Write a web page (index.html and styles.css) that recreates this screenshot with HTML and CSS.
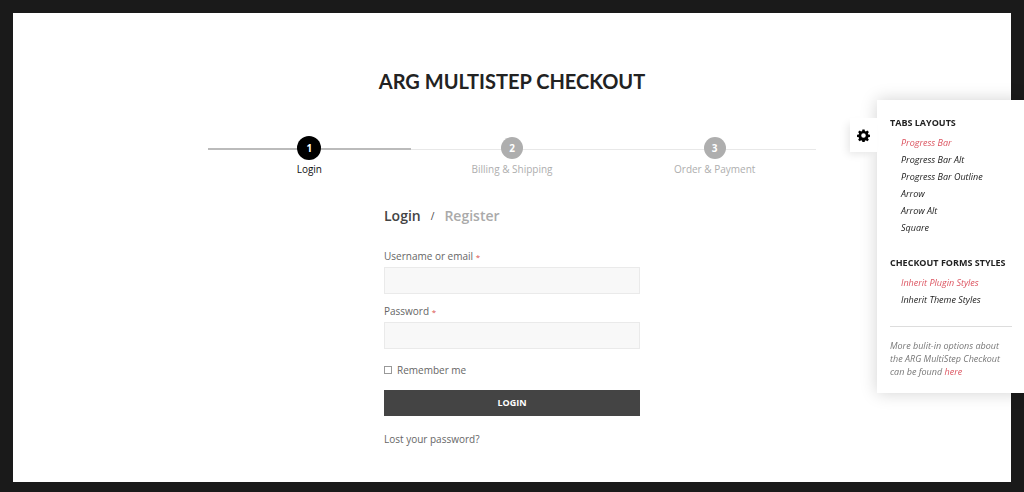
FILE: index.html
```html
<!DOCTYPE html>
<html lang="en">
<head>
    <meta charset="UTF-8">
    <meta name="viewport" content="width=device-width, initial-scale=1.0">
    <title>ARG MultiStep Checkout</title>
    <link rel="stylesheet" href="styles.css">
</head>
<body>
    <main class="page">
        <h1 class="page-title">ARG MULTISTEP CHECKOUT</h1>

        <ol class="steps">
            <li class="step current">
                <div class="step-marker"><span class="step-number">1</span></div>
                <div class="step-name">Login</div>
            </li>
            <li class="step">
                <div class="step-marker"><span class="step-number">2</span></div>
                <div class="step-name">Billing &amp; Shipping</div>
            </li>
            <li class="step">
                <div class="step-marker"><span class="step-number">3</span></div>
                <div class="step-name">Order &amp; Payment</div>
            </li>
        </ol>

        <section class="account">
            <div class="account-tabs">
                <a class="account-tab active" href="#login">Login</a>
                <span class="separator">/</span>
                <a class="account-tab" href="#register">Register</a>
            </div>

            <form class="login-form" id="login">
                <label class="field-label" for="username">Username or email <span class="required">*</span></label>
                <input class="field" type="text" id="username" name="username">

                <label class="field-label" for="password">Password <span class="required">*</span></label>
                <input class="field" type="password" id="password" name="password">

                <label class="remember" for="rememberme">
                    <input class="checkbox" type="checkbox" id="rememberme" name="rememberme">
                    Remember me
                </label>

                <button class="submit" type="submit">LOGIN</button>
                <a class="lost-password" href="#lost">Lost your password?</a>
            </form>
        </section>
    </main>

    <aside class="options">
        <button class="options-toggle" type="button" aria-label="Options">
            <svg width="13" height="13" viewBox="0 0 512 512" aria-hidden="true">
                <path fill-rule="evenodd" d="M213 16h86l12 66 40 17 55-39 61 61-39 55 17 40 66 12v86l-66 12-17 40 39 55-61 61-55-39-40 17-12 66h-86l-12-66-40-17-55 39-61-61 39-55-17-40-66-12v-86l66-12 17-40-39-55 61-61 55 39 40-17zM256 166a90 90 0 1 0 0 180a90 90 0 1 0 0-180z"/>
            </svg>
        </button>

        <h2 class="options-title">TABS LAYOUTS</h2>
        <ul class="options-list">
            <li><a class="selected" href="#progress-bar">Progress Bar</a></li>
            <li><a href="#progress-bar-alt">Progress Bar Alt</a></li>
            <li><a href="#progress-bar-outline">Progress Bar Outline</a></li>
            <li><a href="#arrow">Arrow</a></li>
            <li><a href="#arrow-alt">Arrow Alt</a></li>
            <li><a href="#square">Square</a></li>
        </ul>

        <h2 class="options-title">CHECKOUT FORMS STYLES</h2>
        <ul class="options-list">
            <li><a class="selected" href="#plugin-styles">Inherit Plugin Styles</a></li>
            <li><a href="#theme-styles">Inherit Theme Styles</a></li>
        </ul>

        <p class="options-note">More bulit-in options about the ARG MultiStep Checkout can be found <a href="#more">here</a></p>
    </aside>
</body>
</html>
```

FILE: styles.css
```css
* {
    box-sizing: border-box;
}
body {
    margin: 0;
    min-height: 100vh;
    display: flex;
    padding: 13px 13px 10px;
    background-color: #1a1a1a;
    font-family: "Open Sans", sans-serif;
    font-size: 10px;
    line-height: 16px;
    color: #666;
    overflow-x: hidden;
}
a {
    color: inherit;
    text-decoration: none;
}
.page {
    flex: 1;
    padding: 52px 20px 28px;
    background-color: #fff;
}
.page-title {
    margin: 0;
    font-family: Lato, sans-serif;
    font-size: 20px;
    font-weight: 700;
    line-height: 32px;
    text-align: center;
    color: #222;
}

/* Progress bar */
.steps {
    display: flex;
    max-width: 608px;
    margin: 39px auto 0;
    padding: 0;
    list-style: none;
}
.step {
    flex: 1;
    text-align: center;
    color: #aeaeae;
}
.step-marker {
    display: flex;
    justify-content: center;
    align-items: center;
    height: 24px;
    background: linear-gradient(#e8e8e8, #e8e8e8) 0 13px / 100% 1px no-repeat;
}
.step-number {
    width: 22px;
    height: 22px;
    border-radius: 50%;
    background-color: #aeaeae;
    color: #fff;
    font-weight: 700;
    line-height: 22px;
}
.step-name {
    margin-top: 1px;
}
.step.current {
    color: #111;
}
.step.current .step-marker {
    background: linear-gradient(#bbb, #bbb) 0 12px / 100% 2px no-repeat;
}
.step.current .step-number {
    width: 24px;
    height: 24px;
    background-color: #000;
    line-height: 24px;
}

/* Login form */
.account {
    max-width: 256px;
    margin: 27px auto 0;
}
.account-tabs {
    display: flex;
    align-items: center;
    gap: 10px;
    line-height: 24px;
}
.account-tab {
    font-size: 14px;
    font-weight: 600;
    color: #aaa;
}
.account-tab.active,
.separator {
    color: #444;
}
.login-form {
    display: flex;
    flex-direction: column;
    margin-top: 20px;
}
.field-label {
    margin-bottom: 3px;
}
.required {
    font-size: 8px;
    line-height: 8px;
    color: #d9534f;
}
.field {
    height: 27px;
    margin-bottom: 9px;
    padding: 0 8px;
    border: 1px solid #eaeaea;
    border-radius: 0;
    background-color: #f8f8f8;
    font: inherit;
}
.remember {
    display: flex;
    align-items: center;
    gap: 5px;
    margin-top: 4px;
}
.checkbox {
    appearance: none;
    width: 8px;
    height: 8px;
    margin: 0;
    border: 1px solid #999;
    background-color: #fff;
}
.checkbox:checked {
    background-color: #444;
}
.submit {
    height: 26px;
    margin-top: 12px;
    border: none;
    background-color: #444;
    color: #fff;
    font: inherit;
    font-size: 9px;
    font-weight: 700;
    cursor: pointer;
}
.lost-password {
    align-self: flex-start;
    margin-top: 15px;
}

/* Options panel, fixed over the page edge */
.options {
    position: fixed;
    top: 100px;
    right: 0;
    width: 147px;
    padding: 14px 12px 15px 13px;
    background-color: #fff;
    box-shadow: 0 0 16px rgba(0, 0, 0, 0.18);
    font-size: 9px;
    color: #222;
}
.options-toggle {
    position: absolute;
    top: 18px;
    right: 100%;
    width: 27px;
    height: 34px;
    display: flex;
    justify-content: center;
    align-items: center;
    padding: 0;
    border: none;
    background-color: #fff;
    box-shadow: -4px 4px 8px -2px rgba(0, 0, 0, 0.1);
    cursor: pointer;
}
.options-title {
    margin: 0;
    font-size: 9px;
    font-weight: 700;
    line-height: 18px;
    white-space: nowrap;
}
.options-list {
    margin: 2px 0 18px;
    padding: 0 0 0 11px;
    list-style: none;
    font-style: italic;
    line-height: 17px;
}
.options-list .selected,
.options-note a {
    color: #dc5460;
}
.options-note {
    margin: 0;
    padding-top: 12px;
    border-top: 1px solid #ddd;
    font-style: italic;
    line-height: 13px;
    color: #777;
}
```
